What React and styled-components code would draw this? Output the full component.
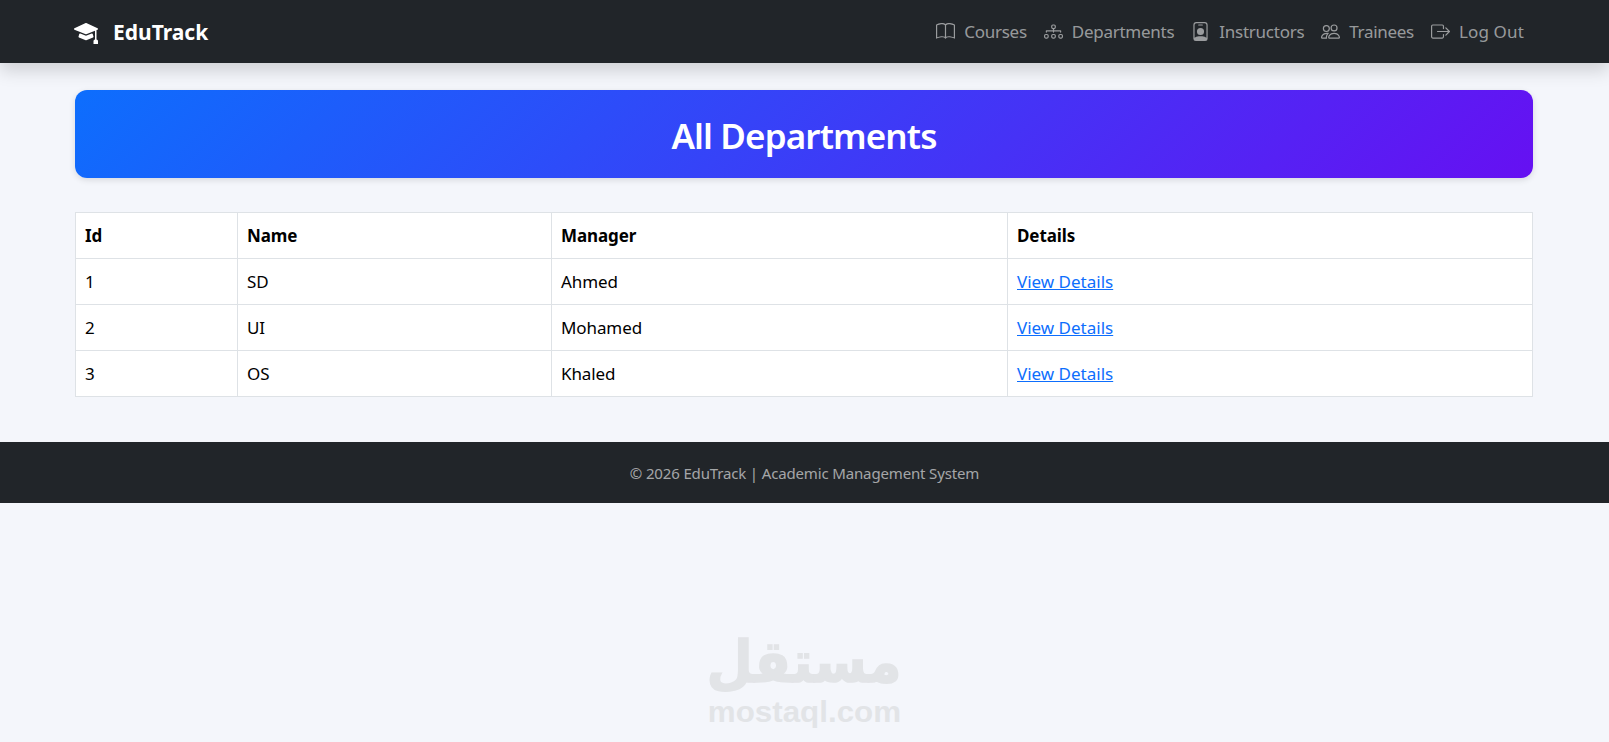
import React from 'react'
import styled, { createGlobalStyle } from 'styled-components'
import { BsBook, BsDiagram3, BsPersonBadge, BsPeople, BsBoxArrowRight, BsMortarboardFill } from 'react-icons/bs'

const GlobalStyle = createGlobalStyle`
  * { box-sizing: border-box; }
  html, body { margin: 0; height: 100%; }
  body {
    background: #f4f6fb;
    color: #212529;
    font-family: "Noto Sans", "Open Sans", sans-serif;
    font-size: 16px;
    overflow: hidden;
  }
`

const Page = styled.div`
  position: relative;
  height: 742px;
`

const Navbar = styled.nav`
  height: 63px;
  padding: 0 76px 0 74px;
  background: #212529;
  display: flex;
  align-items: center;
  justify-content: space-between;
  box-shadow: 0 8px 16px rgba(0, 0, 0, 0.15);
`

const Brand = styled.a`
  display: flex;
  align-items: center;
  gap: 15px;
  color: #fff;
  font-size: 21px;
  font-weight: 700;
`

const NavLinks = styled.div`
  display: flex;
  align-items: center;
  padding-right: 9px;
  gap: 17px;
`

const NavLink = styled.a`
  display: flex;
  align-items: center;
  gap: 9px;
  color: rgba(255, 255, 255, 0.55);
  font-size: 17px;
  letter-spacing: ${(p) => p.$spacing}px;
`

const Main = styled.main`
  padding: 27px 76px 45px 75px;
`

const Hero = styled.div`
  height: 88px;
  padding-top: 2px;
  border-radius: 12px;
  background: linear-gradient(135deg, #0d6efd, #6610f2);
  box-shadow: 0 2px 6px rgba(0, 0, 0, 0.12);
  display: flex;
  align-items: center;
  justify-content: center;
  margin-bottom: 34px;
`

const HeroTitle = styled.h1`
  margin: 0;
  color: #fff;
  font-size: 35px;
  font-weight: 600;
  letter-spacing: -0.87px;
`

const Table = styled.table`
  width: 100%;
  table-layout: fixed;
  border-collapse: collapse;
  background: #fff;
  color: #000;
`

const Th = styled.th`
  width: ${(p) => p.$w}px;
  height: 46px;
  padding: 0 10px 1px 9px;
  border: 1px solid #dee2e6;
  text-align: left;
  font-size: 17px;
  font-weight: 700;
  letter-spacing: -0.1px;
`

const Td = styled.td`
  height: 46px;
  padding: 0 10px 1px 9px;
  border: 1px solid #dee2e6;
  font-size: 17px;
  letter-spacing: -0.1px;
`

const DetailLink = styled.a`
  color: #0d6efd;
  text-decoration: underline;
  letter-spacing: 0;
`

const Footer = styled.footer`
  height: 61px;
  background: #212529;
  color: rgba(255, 255, 255, 0.6);
  display: flex;
  align-items: center;
  justify-content: center;
  font-size: 15px;
  letter-spacing: -0.15px;
`

const Watermark = styled.div`
  position: absolute;
  left: 704px;
  top: 628px;
  width: 200px;
  display: flex;
  flex-direction: column;
  align-items: center;
  color: #e2e4e7;
  font-weight: 700;
`

const WatermarkArabic = styled.span`
  font-family: "DejaVu Sans", sans-serif;
  font-size: 58px;
  line-height: normal;
  transform: scaleX(0.92);
  -webkit-text-stroke: 1.5px #e2e4e7;
`

const WatermarkLatin = styled.span`
  font-family: "Liberation Sans", sans-serif;
  font-size: 29px;
  line-height: normal;
  transform: scaleX(1.08);
`

const links = [
  { label: 'Courses', icon: BsBook, spacing: -0.26 },
  { label: 'Departments', icon: BsDiagram3, spacing: -0.26 },
  { label: 'Instructors', icon: BsPersonBadge, spacing: -0.26 },
  { label: 'Trainees', icon: BsPeople, spacing: -0.3 },
  { label: 'Log Out', icon: BsBoxArrowRight, spacing: 0.15 },
]

const departments = [
  { id: 1, name: 'SD', manager: 'Ahmed' },
  { id: 2, name: 'UI', manager: 'Mohamed' },
  { id: 3, name: 'OS', manager: 'Khaled' },
]

const App = () => {
  return (
    <Page>
      <GlobalStyle />
      <Navbar>
        <Brand>
          <BsMortarboardFill size={24} />
          EduTrack
        </Brand>
        <NavLinks>
          {links.map(({ label, icon: Icon, spacing }) => (
            <NavLink key={label} $spacing={spacing}>
              <Icon size={19} />
              {label}
            </NavLink>
          ))}
        </NavLinks>
      </Navbar>
      <Main>
        <Hero>
          <HeroTitle>All Departments</HeroTitle>
        </Hero>
        <Table>
          <thead>
            <tr>
              <Th $w={162}>Id</Th>
              <Th $w={314}>Name</Th>
              <Th $w={456}>Manager</Th>
              <Th>Details</Th>
            </tr>
          </thead>
          <tbody>
            {departments.map((d) => (
              <tr key={d.id}>
                <Td>{d.id}</Td>
                <Td>{d.name}</Td>
                <Td>{d.manager}</Td>
                <Td><DetailLink href="#">View Details</DetailLink></Td>
              </tr>
            ))}
          </tbody>
        </Table>
      </Main>
      <Footer>© 2026 EduTrack | Academic Management System</Footer>
      <Watermark>
        <WatermarkArabic>مستقل</WatermarkArabic>
        <WatermarkLatin>mostaql.com</WatermarkLatin>
      </Watermark>
    </Page>
  )
}

export default App
